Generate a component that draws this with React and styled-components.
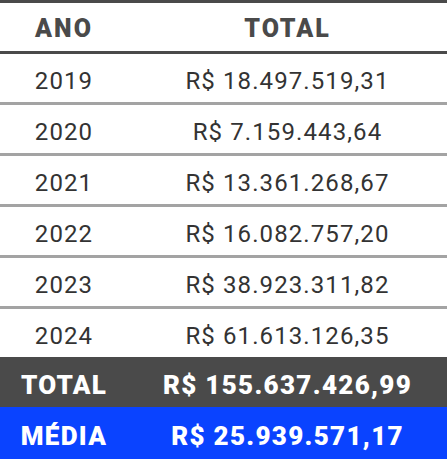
import styled, { createGlobalStyle } from "styled-components";

const Global = createGlobalStyle`
  html, body {
    margin: 0;
    padding: 0;
    background: #ffffff;
  }
  body {
    font-family: Roboto, "Liberation Sans", sans-serif;
  }
`;

const rows = [
  ["2019", "R$ 18.497.519,31"],
  ["2020", "R$ 7.159.443,64"],
  ["2021", "R$ 13.361.268,67"],
  ["2022", "R$ 16.082.757,20"],
  ["2023", "R$ 38.923.311,82"],
  ["2024", "R$ 61.613.126,35"]
];

const Table = styled.table`
  width: 447px;
  border-collapse: collapse;
  border-top: 3px solid #4a4a4a;
`;

const HeadCell = styled.th`
  height: 46px;
  padding: 2px 0 0;
  text-align: center;
  font-family: Roboto, "Liberation Sans", sans-serif;
  font-weight: 900;
  font-size: 25px;
  letter-spacing: 2px;
  color: #4a4a4a;
  border-bottom: 3px solid #4a4a4a;
  width: ${(p) => p.$w || "auto"};
`;

const Cell = styled.td`
  height: 42px;
  padding: 6px 0 0;
  text-align: center;
  font-size: 24px;
  font-weight: 400;
  letter-spacing: 1.1px;
  color: #333333;
  border-bottom: ${(p) => (p.$last ? "none" : "3px solid #a3a3a3")};
`;

const SumRow = styled.tr`
  background: ${(p) => p.$bg};
`;

const SumCell = styled.td`
  height: ${(p) => p.$h - 5}px;
  padding: 5px 0 0;
  text-align: center;
  font-size: 26px;
  font-weight: 900;
  letter-spacing: 1.3px;
  color: #ffffff;
`;

export default function App() {
  return (
    <>
      <Global />
      <Table>
        <thead>
          <tr>
            <HeadCell $w="128px">ANO</HeadCell>
            <HeadCell>TOTAL</HeadCell>
          </tr>
        </thead>
        <tbody>
          {rows.map(([ano, total], i) => (
            <tr key={ano}>
              <Cell $last={i === rows.length - 1}>{ano}</Cell>
              <Cell $last={i === rows.length - 1}>{total}</Cell>
            </tr>
          ))}
          <SumRow $bg="#4a4a4a">
            <SumCell $h={50}>TOTAL</SumCell>
            <SumCell $h={50}>R$ 155.637.426,99</SumCell>
          </SumRow>
          <SumRow $bg="#0a43ff">
            <SumCell $h={52}>MÉDIA</SumCell>
            <SumCell $h={52}>R$ 25.939.571,17</SumCell>
          </SumRow>
        </tbody>
      </Table>
    </>
  );
}
